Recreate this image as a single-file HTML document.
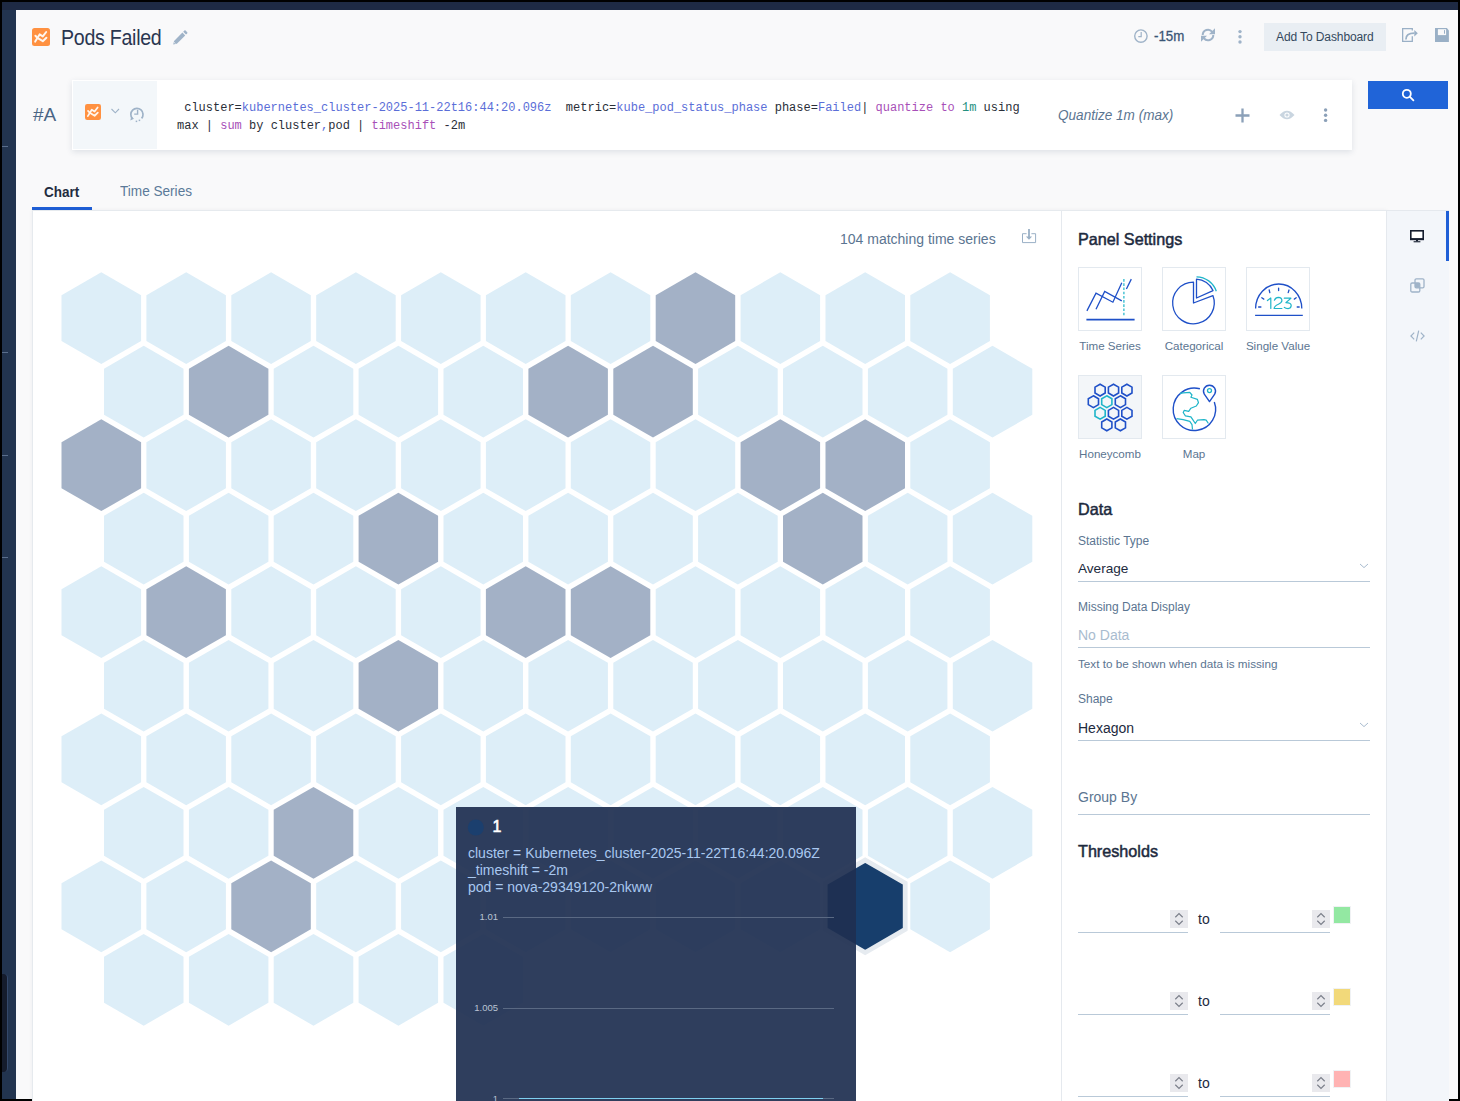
<!DOCTYPE html>
<html><head><meta charset="utf-8">
<style>
*{box-sizing:border-box;margin:0;padding:0}
html,body{width:1460px;height:1101px;overflow:hidden;background:#000;font-family:"Liberation Sans",sans-serif}
.a{position:absolute}
.t{position:absolute;white-space:nowrap;line-height:1}
.mono{font-family:"Liberation Mono",monospace}
svg{position:absolute;overflow:visible}
.ib{position:absolute;width:64px;height:64px;border:1px solid #e3e9ef;background:#fff}
.lbl{position:absolute;white-space:nowrap;line-height:1;font-size:11.6px;color:#5b7591;text-align:center;width:84px}
.flab{position:absolute;white-space:nowrap;line-height:1;font-size:12px;color:#5b7591}
.fval{position:absolute;white-space:nowrap;line-height:1;font-size:14px;color:#1d2a3e}
.uline{position:absolute;height:1px;background:#b9c9d8}
.sec{position:absolute;white-space:nowrap;line-height:1;font-size:16.5px;font-weight:400;color:#1d2a3e;-webkit-text-stroke:0.5px #1d2a3e;transform:scaleX(0.98);transform-origin:0 0}
.spin{position:absolute;width:18px;height:18px;background:#e9e9ed}
.to{position:absolute;white-space:nowrap;line-height:1;font-size:14px;color:#1d2a3e}
.sw{position:absolute;width:18px;height:18px;border:1px solid #f0f2f4}
.q1{color:#2a2e38}.q2{color:#5b6ed8}.q3{color:#a84fb8}.q4{color:#23907f}
</style></head><body>
<!-- frame -->
<div class="a" style="left:2px;top:2px;width:1456px;height:8px;background:#1e2a44"></div>
<div class="a" style="left:2px;top:10px;width:14px;height:1089px;background:#22344f"></div>
<div class="a" style="left:2px;top:146px;width:6px;height:1px;background:#5a6e8c"></div>
<div class="a" style="left:2px;top:352px;width:6px;height:1px;background:#5a6e8c"></div>
<div class="a" style="left:2px;top:455px;width:6px;height:1px;background:#5a6e8c"></div>
<div class="a" style="left:2px;top:557px;width:6px;height:1px;background:#5a6e8c"></div>
<div class="a" style="left:2px;top:974px;width:6px;height:98px;background:#151c2c;border-top-right-radius:4px;border-bottom-right-radius:4px;border-right:1px solid #34486a"></div>
<div class="a" style="left:16px;top:10px;width:1442px;height:1089px;background:#f9f9fa"></div>

<!-- title -->
<svg style="left:32px;top:28px" width="18" height="18" viewBox="0 0 18 18">
<rect x="0" y="0" width="18" height="18" rx="2.5" fill="#ff9141"/>
<polyline points="3.2,13.6 7.6,6.4 10.8,8.4 14.2,4" fill="none" stroke="#fff6ee" stroke-width="2" stroke-linecap="round" stroke-linejoin="round"/>
<polyline points="3.4,7.8 5.8,10.2 10.8,13.2 14.4,9.8" fill="none" stroke="#fff6ee" stroke-width="2" stroke-linecap="round" stroke-linejoin="round"/>
</svg>
<div class="t" style="left:60.5px;top:26.5px;font-size:22px;color:#2a3650;letter-spacing:-0.3px;transform:scaleX(0.89);transform-origin:0 0">Pods Failed</div>
<svg style="left:173px;top:30px" width="15" height="15" viewBox="0 0 15 15">
<path d="M0.2 14.6 L1.1 10.9 L9.4 2.6 L12.2 5.4 L3.9 13.7 Z" fill="#9fb3c8"/>
<path d="M10.2 1.8 L11.4 0.6 Q12 0 12.6 0.6 L14.2 2.2 Q14.8 2.8 14.2 3.4 L13 4.6 Z" fill="#9fb3c8"/>
<path d="M1.1 12.3 L2.5 13.7" stroke="#f9f9fa" stroke-width="0.8"/>
</svg>

<!-- header right -->
<svg style="left:1134px;top:29px" width="14" height="14" viewBox="0 0 14 14">
<circle cx="6.9" cy="7.1" r="6.2" fill="none" stroke="#9fb3c8" stroke-width="1.4"/>
<path d="M7.2 3 V7.6 H4.3" fill="none" stroke="#9fb3c8" stroke-width="1.2"/>
</svg>
<div class="t" style="left:1154px;top:29.2px;font-size:14px;color:#3a5576;transform:scaleX(0.95);transform-origin:0 0;-webkit-text-stroke:0.3px #3a5576">-15m</div>
<svg style="left:1201px;top:28px" width="14" height="14" viewBox="0 0 14 14">
<path d="M1.7 7 A5.3 5.3 0 0 1 11.2 3.8" fill="none" stroke="#9fb3c8" stroke-width="2"/>
<path d="M14 0.3 V6.3 H8 Z" fill="#9fb3c8"/>
<path d="M12.3 7 A5.3 5.3 0 0 1 2.8 10.2" fill="none" stroke="#9fb3c8" stroke-width="2"/>
<path d="M0 13.7 V7.7 H6 Z" fill="#9fb3c8"/>
</svg>
<svg style="left:1236px;top:28px" width="8" height="16" viewBox="0 0 8 16">
<circle cx="4" cy="3.6" r="1.7" fill="#9fb3c8"/><circle cx="4" cy="8.8" r="1.7" fill="#9fb3c8"/><circle cx="4" cy="14" r="1.7" fill="#9fb3c8"/>
</svg>
<div class="a" style="left:1264px;top:23px;width:122px;height:28px;background:#e9eef3"></div>
<div class="t" style="left:1276px;top:30.5px;font-size:12px;color:#34495e;letter-spacing:-0.1px">Add To Dashboard</div>
<svg style="left:1402px;top:28px" width="16" height="14" viewBox="0 0 16 14">
<path d="M10.3 2.6 V0.65 H0.65 V13.35 H10.3 V8.3" fill="none" stroke="#9ab0c6" stroke-width="1.3"/>
<path d="M3.9 11.4 Q3.9 5.2 12.4 5.2" fill="none" stroke="#9ab0c6" stroke-width="1.7"/>
<path d="M12.3 2 L15.8 5.2 L12.3 8.6 Z" fill="#9ab0c6"/>
</svg>
<svg style="left:1435px;top:28px" width="14" height="14" viewBox="0 0 14 14">
<path d="M0 0 H11.9 L13.9 2.4 V13.9 H0 Z" fill="#9ab0c6"/>
<rect x="2.9" y="1.2" width="8.2" height="5.9" fill="#f9f9fa"/>
<rect x="9" y="2.1" width="1" height="3.6" fill="#9ab0c6"/>
</svg>

<!-- query row -->
<div class="t" style="left:33px;top:105px;font-size:19px;color:#4a6585">#A</div>
<div class="a" style="left:72px;top:80px;width:1280px;height:70px;background:#fff;box-shadow:0 2px 6px rgba(40,60,95,0.13)"></div>
<div class="a" style="left:73px;top:81px;width:84px;height:68px;background:#f3f7fa"></div>
<svg style="left:85px;top:104px" width="16" height="16" viewBox="0 0 18 18">
<rect x="0" y="0" width="18" height="18" rx="2.5" fill="#ff9141"/>
<polyline points="3.2,13.6 7.6,6.4 10.8,8.4 14.2,4" fill="none" stroke="#fff6ee" stroke-width="2" stroke-linecap="round" stroke-linejoin="round"/>
<polyline points="3.4,7.8 5.8,10.2 10.8,13.2 14.4,9.8" fill="none" stroke="#fff6ee" stroke-width="2" stroke-linecap="round" stroke-linejoin="round"/>
</svg>
<svg style="left:111px;top:108px" width="9" height="6" viewBox="0 0 9 6">
<path d="M0.5 1 L4.3 4.8 L8 1" fill="none" stroke="#9fb3c8" stroke-width="1.1"/>
</svg>
<svg style="left:129px;top:106px" width="16" height="17" viewBox="0 0 16 17">
<path d="M3.4 12.6 A6.1 6.1 0 1 1 12.6 12.4" fill="none" stroke="#9fb3c8" stroke-width="1.7"/>
<path d="M1.3 14.4 L2.2 10.6 L5 12.7 Z" fill="#9fb3c8"/>
<rect x="6.7" y="14.6" width="1.5" height="1.5" fill="#9fb3c8"/><rect x="9.7" y="13.6" width="1.5" height="1.5" fill="#9fb3c8"/>
<path d="M8.6 3.7 V8.1 H5.2" fill="none" stroke="#9fb3c8" stroke-width="1.4"/>
</svg>
<div class="a mono" style="left:177px;top:99px;width:850px;font-size:12px;line-height:18px;white-space:pre-wrap"><span class="q1"> cluster=</span><span class="q2">kubernetes_cluster-2025-11-22t16:44:20.096z</span><span class="q1">  metric=</span><span class="q2">kube_pod_status_phase</span><span class="q1"> phase=</span><span class="q2">Failed</span><span class="q1">|</span> <span class="q3">quantize</span> <span class="q3">to</span> <span class="q4">1m</span> <span class="q1">using</span>
<span class="q1">max | </span><span class="q3">sum</span><span class="q1"> by cluster</span><span class="q2">,</span><span class="q1">pod | </span><span class="q3">timeshift</span><span class="q1"> -2m</span></div>
<div class="t" style="left:1058px;top:106.6px;font-size:15.5px;font-style:italic;color:#5b7591;transform:scaleX(0.875);transform-origin:0 0">Quantize 1m (max)</div>
<svg style="left:1235px;top:108px" width="15" height="15" viewBox="0 0 15 15">
<path d="M7.5 0.5 V14.5 M0.5 7.5 H14.5" stroke="#8ba0b8" stroke-width="2.3"/>
</svg>
<svg style="left:1279px;top:110px" width="16" height="10" viewBox="0 0 16 10">
<path d="M0.5 5 Q8 -3.5 15.5 5 Q8 13.5 0.5 5 Z" fill="#c9d5e0"/>
<circle cx="8" cy="5" r="2.6" fill="#fff"/><circle cx="8" cy="5" r="1.6" fill="#c9d5e0"/>
</svg>
<svg style="left:1322px;top:108px" width="8" height="15" viewBox="0 0 8 15">
<circle cx="3.6" cy="2" r="1.7" fill="#8ba0b8"/><circle cx="3.6" cy="7.2" r="1.7" fill="#8ba0b8"/><circle cx="3.6" cy="12.4" r="1.7" fill="#8ba0b8"/>
</svg>
<div class="a" style="left:1368px;top:81px;width:80px;height:28px;background:#2064d8"></div>
<svg style="left:1401px;top:88px" width="14" height="14" viewBox="0 0 14 14">
<circle cx="5.8" cy="5.8" r="4" fill="none" stroke="#fff" stroke-width="1.8"/>
<path d="M8.7 8.7 L12.4 12.4" stroke="#fff" stroke-width="1.8" stroke-linecap="round"/>
</svg>

<!-- tabs -->
<div class="t" style="left:44px;top:184.6px;font-size:14px;font-weight:700;color:#1f2c40;transform:scaleX(0.965);transform-origin:0 0">Chart</div>
<div class="t" style="left:120px;top:184.8px;font-size:13.8px;color:#5b7a99;transform:scaleX(0.985);transform-origin:0 0">Time Series</div>
<div class="a" style="left:32px;top:207px;width:60px;height:3px;background:#1f5fd6"></div>

<!-- panel -->
<div class="a" style="left:32px;top:210px;width:1355px;height:900px;background:#fff;border:1px solid #e6eaee;box-shadow:0 0 4px rgba(30,40,60,0.05)"></div>
<div class="a" style="left:1061px;top:211px;width:1px;height:900px;background:#e5e9ee"></div>
<div class="a" style="left:1386px;top:210px;width:63px;height:900px;background:#f3f6fa;border-left:1px solid #e5e9ee;border-top:1px solid #e5e9ee"></div>
<div class="a" style="left:1446px;top:211px;width:3px;height:50px;background:#1f5fd6"></div>

<div class="t" style="left:840px;top:232.3px;font-size:14px;color:#5b7591">104 matching time series</div>
<svg style="left:1022px;top:229px" width="14" height="14" viewBox="0 0 14 14">
<path d="M4.6 4.7 H0.5 V13.6 H13.6 V4.7 H9.4" fill="none" stroke="#9ab0c6" stroke-width="1"/>
<path d="M7 0 V8" stroke="#9ab0c6" stroke-width="1.8"/>
<path d="M3.9 7.4 H10.1 L7 10.7 Z" fill="#9ab0c6"/>
</svg>

<svg class="hc" style="left:0;top:0" width="1460" height="1101" viewBox="0 0 1460 1101">
<g fill="#ddeef8"><polygon points="101.3,272.3 141.1,295.2 141.1,341.1 101.3,364.1 61.5,341.1 61.5,295.2"/><polygon points="186.2,272.3 225.9,295.2 225.9,341.1 186.2,364.1 146.4,341.1 146.4,295.2"/><polygon points="271.1,272.3 310.8,295.2 310.8,341.1 271.1,364.1 231.3,341.1 231.3,295.2"/><polygon points="355.9,272.3 395.7,295.2 395.7,341.1 355.9,364.1 316.2,341.1 316.2,295.2"/><polygon points="440.8,272.3 480.6,295.2 480.6,341.1 440.8,364.1 401.1,341.1 401.1,295.2"/><polygon points="525.7,272.3 565.5,295.2 565.5,341.1 525.7,364.1 485.9,341.1 485.9,295.2"/><polygon points="610.6,272.3 650.3,295.2 650.3,341.1 610.6,364.1 570.8,341.1 570.8,295.2"/><polygon points="780.3,272.3 820.1,295.2 820.1,341.1 780.3,364.1 740.6,341.1 740.6,295.2"/><polygon points="865.2,272.3 905.0,295.2 905.0,341.1 865.2,364.1 825.5,341.1 825.5,295.2"/><polygon points="950.1,272.3 989.9,295.2 989.9,341.1 950.1,364.1 910.3,341.1 910.3,295.2"/><polygon points="143.7,345.8 183.5,368.8 183.5,414.7 143.7,437.6 104.0,414.7 104.0,368.8"/><polygon points="313.5,345.8 353.3,368.8 353.3,414.7 313.5,437.6 273.7,414.7 273.7,368.8"/><polygon points="398.4,345.8 438.1,368.8 438.1,414.7 398.4,437.6 358.6,414.7 358.6,368.8"/><polygon points="483.3,345.8 523.0,368.8 523.0,414.7 483.3,437.6 443.5,414.7 443.5,368.8"/><polygon points="737.9,345.8 777.7,368.8 777.7,414.7 737.9,437.6 698.1,414.7 698.1,368.8"/><polygon points="822.8,345.8 862.5,368.8 862.5,414.7 822.8,437.6 783.0,414.7 783.0,368.8"/><polygon points="907.7,345.8 947.4,368.8 947.4,414.7 907.7,437.6 867.9,414.7 867.9,368.8"/><polygon points="992.5,345.8 1032.3,368.8 1032.3,414.7 992.5,437.6 952.8,414.7 952.8,368.8"/><polygon points="186.2,419.3 225.9,442.3 225.9,488.2 186.2,511.1 146.4,488.2 146.4,442.3"/><polygon points="271.1,419.3 310.8,442.3 310.8,488.2 271.1,511.1 231.3,488.2 231.3,442.3"/><polygon points="355.9,419.3 395.7,442.3 395.7,488.2 355.9,511.1 316.2,488.2 316.2,442.3"/><polygon points="440.8,419.3 480.6,442.3 480.6,488.2 440.8,511.1 401.1,488.2 401.1,442.3"/><polygon points="525.7,419.3 565.5,442.3 565.5,488.2 525.7,511.1 485.9,488.2 485.9,442.3"/><polygon points="610.6,419.3 650.3,442.3 650.3,488.2 610.6,511.1 570.8,488.2 570.8,442.3"/><polygon points="695.5,419.3 735.2,442.3 735.2,488.2 695.5,511.1 655.7,488.2 655.7,442.3"/><polygon points="950.1,419.3 989.9,442.3 989.9,488.2 950.1,511.1 910.3,488.2 910.3,442.3"/><polygon points="143.7,492.8 183.5,515.8 183.5,561.7 143.7,584.6 104.0,561.7 104.0,515.8"/><polygon points="228.6,492.8 268.4,515.8 268.4,561.7 228.6,584.6 188.9,561.7 188.9,515.8"/><polygon points="313.5,492.8 353.3,515.8 353.3,561.7 313.5,584.6 273.7,561.7 273.7,515.8"/><polygon points="483.3,492.8 523.0,515.8 523.0,561.7 483.3,584.6 443.5,561.7 443.5,515.8"/><polygon points="568.1,492.8 607.9,515.8 607.9,561.7 568.1,584.6 528.4,561.7 528.4,515.8"/><polygon points="653.0,492.8 692.8,515.8 692.8,561.7 653.0,584.6 613.3,561.7 613.3,515.8"/><polygon points="737.9,492.8 777.7,515.8 777.7,561.7 737.9,584.6 698.1,561.7 698.1,515.8"/><polygon points="907.7,492.8 947.4,515.8 947.4,561.7 907.7,584.6 867.9,561.7 867.9,515.8"/><polygon points="992.5,492.8 1032.3,515.8 1032.3,561.7 992.5,584.6 952.8,561.7 952.8,515.8"/><polygon points="101.3,566.3 141.1,589.3 141.1,635.2 101.3,658.1 61.5,635.2 61.5,589.3"/><polygon points="271.1,566.3 310.8,589.3 310.8,635.2 271.1,658.1 231.3,635.2 231.3,589.3"/><polygon points="355.9,566.3 395.7,589.3 395.7,635.2 355.9,658.1 316.2,635.2 316.2,589.3"/><polygon points="440.8,566.3 480.6,589.3 480.6,635.2 440.8,658.1 401.1,635.2 401.1,589.3"/><polygon points="695.5,566.3 735.2,589.3 735.2,635.2 695.5,658.1 655.7,635.2 655.7,589.3"/><polygon points="780.3,566.3 820.1,589.3 820.1,635.2 780.3,658.1 740.6,635.2 740.6,589.3"/><polygon points="865.2,566.3 905.0,589.3 905.0,635.2 865.2,658.1 825.5,635.2 825.5,589.3"/><polygon points="950.1,566.3 989.9,589.3 989.9,635.2 950.1,658.1 910.3,635.2 910.3,589.3"/><polygon points="143.7,639.9 183.5,662.8 183.5,708.7 143.7,731.6 104.0,708.7 104.0,662.8"/><polygon points="228.6,639.9 268.4,662.8 268.4,708.7 228.6,731.6 188.9,708.7 188.9,662.8"/><polygon points="313.5,639.9 353.3,662.8 353.3,708.7 313.5,731.6 273.7,708.7 273.7,662.8"/><polygon points="483.3,639.9 523.0,662.8 523.0,708.7 483.3,731.6 443.5,708.7 443.5,662.8"/><polygon points="568.1,639.9 607.9,662.8 607.9,708.7 568.1,731.6 528.4,708.7 528.4,662.8"/><polygon points="653.0,639.9 692.8,662.8 692.8,708.7 653.0,731.6 613.3,708.7 613.3,662.8"/><polygon points="737.9,639.9 777.7,662.8 777.7,708.7 737.9,731.6 698.1,708.7 698.1,662.8"/><polygon points="822.8,639.9 862.5,662.8 862.5,708.7 822.8,731.6 783.0,708.7 783.0,662.8"/><polygon points="907.7,639.9 947.4,662.8 947.4,708.7 907.7,731.6 867.9,708.7 867.9,662.8"/><polygon points="992.5,639.9 1032.3,662.8 1032.3,708.7 992.5,731.6 952.8,708.7 952.8,662.8"/><polygon points="101.3,713.4 141.1,736.3 141.1,782.2 101.3,805.2 61.5,782.2 61.5,736.3"/><polygon points="186.2,713.4 225.9,736.3 225.9,782.2 186.2,805.2 146.4,782.2 146.4,736.3"/><polygon points="271.1,713.4 310.8,736.3 310.8,782.2 271.1,805.2 231.3,782.2 231.3,736.3"/><polygon points="355.9,713.4 395.7,736.3 395.7,782.2 355.9,805.2 316.2,782.2 316.2,736.3"/><polygon points="440.8,713.4 480.6,736.3 480.6,782.2 440.8,805.2 401.1,782.2 401.1,736.3"/><polygon points="525.7,713.4 565.5,736.3 565.5,782.2 525.7,805.2 485.9,782.2 485.9,736.3"/><polygon points="610.6,713.4 650.3,736.3 650.3,782.2 610.6,805.2 570.8,782.2 570.8,736.3"/><polygon points="695.5,713.4 735.2,736.3 735.2,782.2 695.5,805.2 655.7,782.2 655.7,736.3"/><polygon points="780.3,713.4 820.1,736.3 820.1,782.2 780.3,805.2 740.6,782.2 740.6,736.3"/><polygon points="865.2,713.4 905.0,736.3 905.0,782.2 865.2,805.2 825.5,782.2 825.5,736.3"/><polygon points="950.1,713.4 989.9,736.3 989.9,782.2 950.1,805.2 910.3,782.2 910.3,736.3"/><polygon points="143.7,786.9 183.5,809.8 183.5,855.7 143.7,878.7 104.0,855.7 104.0,809.8"/><polygon points="228.6,786.9 268.4,809.8 268.4,855.7 228.6,878.7 188.9,855.7 188.9,809.8"/><polygon points="398.4,786.9 438.1,809.8 438.1,855.7 398.4,878.7 358.6,855.7 358.6,809.8"/><polygon points="483.3,786.9 523.0,809.8 523.0,855.7 483.3,878.7 443.5,855.7 443.5,809.8"/><polygon points="568.1,786.9 607.9,809.8 607.9,855.7 568.1,878.7 528.4,855.7 528.4,809.8"/><polygon points="653.0,786.9 692.8,809.8 692.8,855.7 653.0,878.7 613.3,855.7 613.3,809.8"/><polygon points="737.9,786.9 777.7,809.8 777.7,855.7 737.9,878.7 698.1,855.7 698.1,809.8"/><polygon points="822.8,786.9 862.5,809.8 862.5,855.7 822.8,878.7 783.0,855.7 783.0,809.8"/><polygon points="907.7,786.9 947.4,809.8 947.4,855.7 907.7,878.7 867.9,855.7 867.9,809.8"/><polygon points="992.5,786.9 1032.3,809.8 1032.3,855.7 992.5,878.7 952.8,855.7 952.8,809.8"/><polygon points="101.3,860.4 141.1,883.3 141.1,929.2 101.3,952.2 61.5,929.2 61.5,883.3"/><polygon points="186.2,860.4 225.9,883.3 225.9,929.2 186.2,952.2 146.4,929.2 146.4,883.3"/><polygon points="355.9,860.4 395.7,883.3 395.7,929.2 355.9,952.2 316.2,929.2 316.2,883.3"/><polygon points="440.8,860.4 480.6,883.3 480.6,929.2 440.8,952.2 401.1,929.2 401.1,883.3"/><polygon points="525.7,860.4 565.5,883.3 565.5,929.2 525.7,952.2 485.9,929.2 485.9,883.3"/><polygon points="610.6,860.4 650.3,883.3 650.3,929.2 610.6,952.2 570.8,929.2 570.8,883.3"/><polygon points="695.5,860.4 735.2,883.3 735.2,929.2 695.5,952.2 655.7,929.2 655.7,883.3"/><polygon points="780.3,860.4 820.1,883.3 820.1,929.2 780.3,952.2 740.6,929.2 740.6,883.3"/><polygon points="950.1,860.4 989.9,883.3 989.9,929.2 950.1,952.2 910.3,929.2 910.3,883.3"/><polygon points="143.7,933.9 183.5,956.8 183.5,1002.7 143.7,1025.7 104.0,1002.7 104.0,956.8"/><polygon points="228.6,933.9 268.4,956.8 268.4,1002.7 228.6,1025.7 188.9,1002.7 188.9,956.8"/><polygon points="313.5,933.9 353.3,956.8 353.3,1002.7 313.5,1025.7 273.7,1002.7 273.7,956.8"/><polygon points="398.4,933.9 438.1,956.8 438.1,1002.7 398.4,1025.7 358.6,1002.7 358.6,956.8"/><polygon points="483.3,933.9 523.0,956.8 523.0,1002.7 483.3,1025.7 443.5,1002.7 443.5,956.8"/></g>
<g fill="#a3b1c6"><polygon points="695.5,272.3 735.2,295.2 735.2,341.1 695.5,364.1 655.7,341.1 655.7,295.2"/><polygon points="228.6,345.8 268.4,368.8 268.4,414.7 228.6,437.6 188.9,414.7 188.9,368.8"/><polygon points="568.1,345.8 607.9,368.8 607.9,414.7 568.1,437.6 528.4,414.7 528.4,368.8"/><polygon points="653.0,345.8 692.8,368.8 692.8,414.7 653.0,437.6 613.3,414.7 613.3,368.8"/><polygon points="101.3,419.3 141.1,442.3 141.1,488.2 101.3,511.1 61.5,488.2 61.5,442.3"/><polygon points="780.3,419.3 820.1,442.3 820.1,488.2 780.3,511.1 740.6,488.2 740.6,442.3"/><polygon points="865.2,419.3 905.0,442.3 905.0,488.2 865.2,511.1 825.5,488.2 825.5,442.3"/><polygon points="398.4,492.8 438.1,515.8 438.1,561.7 398.4,584.6 358.6,561.7 358.6,515.8"/><polygon points="822.8,492.8 862.5,515.8 862.5,561.7 822.8,584.6 783.0,561.7 783.0,515.8"/><polygon points="186.2,566.3 225.9,589.3 225.9,635.2 186.2,658.1 146.4,635.2 146.4,589.3"/><polygon points="525.7,566.3 565.5,589.3 565.5,635.2 525.7,658.1 485.9,635.2 485.9,589.3"/><polygon points="610.6,566.3 650.3,589.3 650.3,635.2 610.6,658.1 570.8,635.2 570.8,589.3"/><polygon points="398.4,639.9 438.1,662.8 438.1,708.7 398.4,731.6 358.6,708.7 358.6,662.8"/><polygon points="313.5,786.9 353.3,809.8 353.3,855.7 313.5,878.7 273.7,855.7 273.7,809.8"/><polygon points="271.1,860.4 310.8,883.3 310.8,929.2 271.1,952.2 231.3,929.2 231.3,883.3"/></g>
<polygon points="865.2,860.1 905.2,883.2 905.2,929.4 865.2,952.5 825.2,929.4 825.2,883.2" fill="#173e6c" stroke="#e6ebf0" stroke-width="4.8" stroke-linejoin="miter"/>
</svg>

<div class="sec" style="left:1078px;top:230.7px">Panel Settings</div>
<!-- icon boxes -->
<div class="ib" style="left:1078px;top:267px"></div>
<svg style="left:1078px;top:267px" width="63" height="63" viewBox="0 0 63 63">
<path d="M8.4 52.6 H56.6" stroke="#1f50c8" stroke-width="1.6"/>
<polyline points="8.9,43.9 18,26.1 34.9,35.2 43.8,15.8" fill="none" stroke="#1f50c8" stroke-width="1.3"/>
<polyline points="18,42.2 26.7,24.5 43.8,33.9" fill="none" stroke="#1f50c8" stroke-width="1.3"/>
<path d="M48.4 22 L53.3 12.1" stroke="#1f50c8" stroke-width="1.3"/>
<path d="M45.9 12.1 V48.3" stroke="#1fb5c9" stroke-width="1.2" stroke-dasharray="2.6 1.6"/>
</svg>
<div class="ib" style="left:1162px;top:267px"></div>
<svg style="left:1162px;top:267px" width="63" height="63" viewBox="0 0 63 63">
<path d="M31.5 15.2 A20.8 20.8 0 1 0 50.9 28.6 L31.5 36 Z" fill="none" stroke="#1f50c8" stroke-width="1.3" stroke-linejoin="round"/>
<path d="M34.5 12.2 V31 L51 23.6 A18.8 18.8 0 0 0 34.5 12.2 Z" fill="none" stroke="#1f50c8" stroke-width="1.3" stroke-linejoin="round"/>
<path d="M34.5 9.8 A21.2 21.2 0 0 1 54.3 24.3" fill="none" stroke="#1fb5c9" stroke-width="1.3"/>
</svg>
<div class="ib" style="left:1246px;top:267px"></div>
<svg style="left:1246px;top:267px" width="63" height="63" viewBox="0 0 63 63">
<path d="M9.6 41.6 A23.1 24.6 0 0 1 32.7 17 A23.1 24.6 0 0 1 55.8 41.6" fill="none" stroke="#1f50c8" stroke-width="1.3"/>
<path d="M9.1 48.3 H56.8" stroke="#1f50c8" stroke-width="1.3"/>
<g stroke="#1f50c8" stroke-width="1.3" stroke-linecap="round">
<path d="M12.6 40 H14.9"/><path d="M15.8 30.8 L17.8 32.1"/><path d="M23.2 23 L23.8 25.6"/><path d="M32.6 21.1 V23.6"/><path d="M43 23 L42.2 25.6"/><path d="M50.2 30.8 L48.3 32.1"/><path d="M51.2 40 H53.2"/>
</g>
<g fill="none" stroke="#1fb5c9" stroke-width="1.2" stroke-linejoin="round" stroke-linecap="round">
<path d="M21.4 33.6 L24.8 31 V41.5"/>
<path d="M28.4 33.2 Q29.6 30.3 32.3 30.3 Q35.9 30.5 35.9 33.4 Q35.9 35.5 32.4 37.2 Q28.3 39 28.1 41.5 H35.9"/>
<path d="M38.3 31.2 H44.9 L39.9 35.6 Q45.2 35.6 45.2 38.6 Q45.1 41.6 42.1 41.6 Q39.6 41.6 38.3 40.3"/>
</g>
</svg>
<div class="lbl" style="left:1068px;top:339.9px">Time Series</div>
<div class="lbl" style="left:1152px;top:339.9px">Categorical</div>
<div class="lbl" style="left:1236px;top:339.9px">Single Value</div>

<div class="ib" style="left:1078px;top:375px;background:#f3f6f9"></div>
<svg style="left:1078px;top:375px" width="63" height="63" viewBox="0 0 63 63">
<g fill="none" stroke="#1f50c8" stroke-width="1.6" transform="translate(0.4,0)">
<polygon id="hx" points="0,-5.9 5.1,-2.95 5.1,2.95 0,5.9 -5.1,2.95 -5.1,-2.95" transform="translate(21.7,15.1)"/>
<polygon points="0,-5.9 5.1,-2.95 5.1,2.95 0,5.9 -5.1,2.95 -5.1,-2.95" transform="translate(35.1,15.1)"/>
<polygon points="0,-5.9 5.1,-2.95 5.1,2.95 0,5.9 -5.1,2.95 -5.1,-2.95" transform="translate(48.5,15.1)"/>
<polygon points="0,-5.9 5.1,-2.95 5.1,2.95 0,5.9 -5.1,2.95 -5.1,-2.95" transform="translate(15,26.7)"/>
<polygon points="0,-5.9 5.1,-2.95 5.1,2.95 0,5.9 -5.1,2.95 -5.1,-2.95" transform="translate(42,26.7)"/>
<polygon points="0,-5.9 5.1,-2.95 5.1,2.95 0,5.9 -5.1,2.95 -5.1,-2.95" transform="translate(35.1,38.3)"/>
<polygon points="0,-5.9 5.1,-2.95 5.1,2.95 0,5.9 -5.1,2.95 -5.1,-2.95" transform="translate(48.5,38.3)"/>
<polygon points="0,-5.9 5.1,-2.95 5.1,2.95 0,5.9 -5.1,2.95 -5.1,-2.95" transform="translate(28.4,49.9)"/>
<polygon points="0,-5.9 5.1,-2.95 5.1,2.95 0,5.9 -5.1,2.95 -5.1,-2.95" transform="translate(42,49.9)"/>
</g>
<g fill="none" stroke="#1fb5c9" stroke-width="1.6" transform="translate(0.4,0)">
<polygon points="0,-5.9 5.1,-2.95 5.1,2.95 0,5.9 -5.1,2.95 -5.1,-2.95" transform="translate(28.4,26.7)"/>
<polygon points="0,-5.9 5.1,-2.95 5.1,2.95 0,5.9 -5.1,2.95 -5.1,-2.95" transform="translate(21.7,38.3)"/>
</g>
</svg>
<div class="ib" style="left:1162px;top:375px"></div>
<svg style="left:1162px;top:375px" width="63" height="63" viewBox="0 0 63 63">
<path d="M37.9 13.8 A21.2 21.2 0 1 0 52.3 27" fill="none" stroke="#1f50c8" stroke-width="1.4"/>
<path d="M47.5 26.6 L42.3 19.2 A6 6 0 1 1 52.7 19.2 Z" fill="none" stroke="#1f50c8" stroke-width="1.4" stroke-linejoin="round"/>
<circle cx="47.5" cy="15.6" r="2" fill="none" stroke="#1fb5c9" stroke-width="1.3"/>
<path d="M17.9 18.4 L21.2 17.8 L27.8 17.3 L30 20 L28.9 22.2 L35.4 24.4 L36.5 27.7 L34.3 31 L28.9 33.2 L26.7 36.4 L22.3 35.3 L21.2 37.5 L23.4 40.8 L28.9 41.9 L31.1 45.2 L33.3 48.5 L35.4 45.2 L42 44.7 L44.2 45.2 L46.4 48.5" fill="none" stroke="#1fb5c9" stroke-width="1.2" stroke-linejoin="round"/>
<path d="M14.6 43.6 L21.2 44.7 L27.8 46.3 L30 49.6 L30.5 54.5" fill="none" stroke="#1fb5c9" stroke-width="1.2" stroke-linejoin="round"/>
</svg>
<div class="lbl" style="left:1068px;top:448px">Honeycomb</div>
<div class="lbl" style="left:1152px;top:448px">Map</div>

<div class="sec" style="left:1078px;top:500.6px">Data</div>
<div class="flab" style="left:1078px;top:535.3px">Statistic Type</div>
<div class="fval" style="left:1078px;top:562.4px;font-size:13.6px">Average</div>
<svg style="left:1359px;top:563px" width="10" height="6" viewBox="0 0 10 6"><path d="M1 1 L5 4.6 L9 1" fill="none" stroke="#a9bccf" stroke-width="1"/></svg>
<div class="uline" style="left:1078px;top:581px;width:292px"></div>
<div class="flab" style="left:1078px;top:601.1px">Missing Data Display</div>
<div class="fval" style="left:1078px;top:628.1px;color:#a9bccf">No Data</div>
<div class="uline" style="left:1078px;top:647px;width:292px"></div>
<div class="flab" style="left:1078px;top:657.6px;font-size:11.7px">Text to be shown when data is missing</div>
<div class="flab" style="left:1078px;top:693.3px">Shape</div>
<div class="fval" style="left:1078px;top:721.2px">Hexagon</div>
<svg style="left:1359px;top:722px" width="10" height="6" viewBox="0 0 10 6"><path d="M1 1 L5 4.6 L9 1" fill="none" stroke="#a9bccf" stroke-width="1"/></svg>
<div class="uline" style="left:1078px;top:740px;width:292px"></div>
<div class="fval" style="left:1078px;top:790.1px;color:#5b7591">Group By</div>
<div class="uline" style="left:1078px;top:813.5px;width:292px"></div>

<div class="sec" style="left:1078px;top:843px">Thresholds</div>
<div class="uline" style="left:1078px;top:932px;width:110px"></div>
<div class="spin" style="left:1170px;top:910px"></div>
<svg style="left:1170px;top:910px" width="18" height="18" viewBox="0 0 18 18"><path d="M5.3 7.2 L9 3.6 L12.7 7.2 M5.3 10.8 L9 14.4 L12.7 10.8" fill="none" stroke="#7b7f8a" stroke-width="1.2"/></svg>
<div class="to" style="left:1198px;top:912px">to</div>
<div class="uline" style="left:1220px;top:932px;width:110px"></div>
<div class="spin" style="left:1312px;top:910px"></div>
<svg style="left:1312px;top:910px" width="18" height="18" viewBox="0 0 18 18"><path d="M5.3 7.2 L9 3.6 L12.7 7.2 M5.3 10.8 L9 14.4 L12.7 10.8" fill="none" stroke="#7b7f8a" stroke-width="1.2"/></svg>
<div class="sw" style="left:1332.5px;top:906px;background:#93e8a2"></div>
<div class="uline" style="left:1078px;top:1014px;width:110px"></div>
<div class="spin" style="left:1170px;top:992px"></div>
<svg style="left:1170px;top:992px" width="18" height="18" viewBox="0 0 18 18"><path d="M5.3 7.2 L9 3.6 L12.7 7.2 M5.3 10.8 L9 14.4 L12.7 10.8" fill="none" stroke="#7b7f8a" stroke-width="1.2"/></svg>
<div class="to" style="left:1198px;top:994px">to</div>
<div class="uline" style="left:1220px;top:1014px;width:110px"></div>
<div class="spin" style="left:1312px;top:992px"></div>
<svg style="left:1312px;top:992px" width="18" height="18" viewBox="0 0 18 18"><path d="M5.3 7.2 L9 3.6 L12.7 7.2 M5.3 10.8 L9 14.4 L12.7 10.8" fill="none" stroke="#7b7f8a" stroke-width="1.2"/></svg>
<div class="sw" style="left:1332.5px;top:988px;background:#f2d97a"></div>
<div class="uline" style="left:1078px;top:1096px;width:110px"></div>
<div class="spin" style="left:1170px;top:1074px"></div>
<svg style="left:1170px;top:1074px" width="18" height="18" viewBox="0 0 18 18"><path d="M5.3 7.2 L9 3.6 L12.7 7.2 M5.3 10.8 L9 14.4 L12.7 10.8" fill="none" stroke="#7b7f8a" stroke-width="1.2"/></svg>
<div class="to" style="left:1198px;top:1076px">to</div>
<div class="uline" style="left:1220px;top:1096px;width:110px"></div>
<div class="spin" style="left:1312px;top:1074px"></div>
<svg style="left:1312px;top:1074px" width="18" height="18" viewBox="0 0 18 18"><path d="M5.3 7.2 L9 3.6 L12.7 7.2 M5.3 10.8 L9 14.4 L12.7 10.8" fill="none" stroke="#7b7f8a" stroke-width="1.2"/></svg>
<div class="sw" style="left:1332.5px;top:1070px;background:#ffb3b3"></div>
<svg style="left:1410px;top:230px" width="14" height="13" viewBox="0 0 14 13">
<rect x="0.8" y="0.8" width="12.4" height="8.4" fill="#fff" stroke="#151d2e" stroke-width="1.6"/>
<rect x="0" y="8.2" width="14" height="2" fill="#151d2e"/>
<rect x="6" y="10" width="2" height="1.2" fill="#151d2e"/>
<rect x="3.6" y="11.2" width="6.8" height="1.1" fill="#151d2e"/>
</svg>
<svg style="left:1410px;top:278px" width="15" height="15" viewBox="0 0 15 15">
<rect x="5" y="0.8" width="9" height="9" rx="1.3" fill="none" stroke="#9fb3c8" stroke-width="1.3"/>
<rect x="0.8" y="5" width="9" height="9" rx="1.3" fill="none" stroke="#9fb3c8" stroke-width="1.3"/>
<rect x="5" y="5" width="4.8" height="4.8" fill="#9fb3c8"/>
</svg>
<svg style="left:1410px;top:330px" width="15" height="12" viewBox="0 0 15 12">
<path d="M4.2 2.6 L0.9 6 L4.2 9.4 M10.8 2.6 L14.1 6 L10.8 9.4 M8.7 0.6 L6.3 11.4" fill="none" stroke="#9fb3c8" stroke-width="1.2"/>
</svg>


<div class="a" style="left:456px;top:807px;width:400px;height:300px;background:rgba(31,47,81,0.93)"></div>
<svg style="left:467px;top:819px" width="17" height="17" viewBox="0 0 17 17"><circle cx="8.8" cy="8.5" r="8" fill="#1b3f6e"/></svg>
<div class="t" style="left:492.5px;top:818.5px;font-size:16px;color:#fff;-webkit-text-stroke:0.6px #fff">1</div>
<div class="t" style="left:468px;top:846px;font-size:14px;color:#a9c8f0">cluster = Kubernetes_cluster-2025-11-22T16:44:20.096Z</div>
<div class="t" style="left:468px;top:862.9px;font-size:14px;color:#a9c8f0">_timeshift = -2m</div>
<div class="t" style="left:468px;top:879.6px;font-size:14px;color:#a9c8f0">pod = nova-29349120-2nkww</div>
<div class="t" style="left:440px;top:912.3px;width:58px;text-align:right;font-size:9.5px;color:#b9c4d3">1.01</div>
<div class="t" style="left:440px;top:1003.2px;width:58px;text-align:right;font-size:9.5px;color:#b9c4d3">1.005</div>
<div class="t" style="left:440px;top:1094.1px;width:58px;text-align:right;font-size:9.5px;color:#b9c4d3">1</div>
<div class="a" style="left:503px;top:917px;width:331px;height:1px;background:#5a6983"></div>
<div class="a" style="left:503px;top:1008px;width:331px;height:1px;background:#5a6983"></div>
<div class="a" style="left:503px;top:1098px;width:331px;height:1px;background:#5a6983"></div>
<div class="a" style="left:519px;top:1097.5px;width:304px;height:1.5px;background:#7fd0f0"></div>


</body></html>
